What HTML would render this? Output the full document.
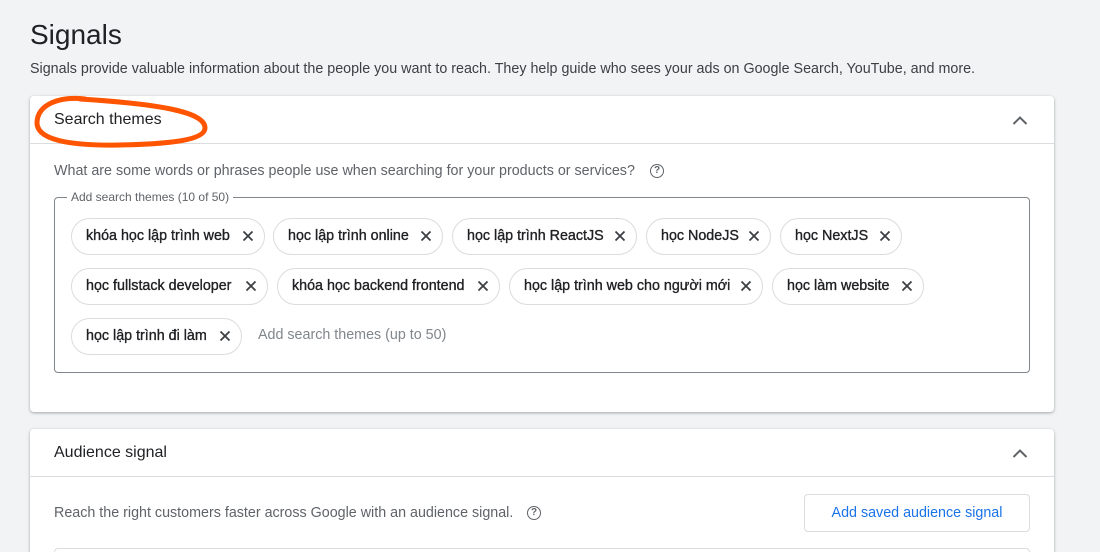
<!DOCTYPE html>
<html><head><meta charset="utf-8"><style>
*{box-sizing:border-box;margin:0;padding:0}
html,body{width:1100px;height:552px;overflow:hidden}
body{background:#f1f3f4;font-family:"Liberation Sans",Arial,sans-serif;position:relative;color:#202124}
.abs{position:absolute}
h1{position:absolute;left:30px;top:19px;font-size:28px;font-weight:400;color:#202124}
.sub{left:30px;top:61px;font-size:14.3px;color:#3c4043}
.card{position:absolute;left:30px;width:1024px;background:#fff;border-radius:4px;box-shadow:0 1px 3px rgba(60,64,67,.3),0 1px 2px rgba(60,64,67,.15)}
.hd{height:48px;border-bottom:1px solid #dadce0;position:relative}
.hd span{position:absolute;left:24px;top:15px;font-size:16px;color:#202124}
.chev{position:absolute;right:26px;top:19px}
.q{font-size:14.3px;color:#5f6368}
.box{position:absolute;left:24px;top:101px;width:976px;height:176px;border:1px solid #80868b;border-radius:4px}
.lg{position:absolute;left:12px;top:-8px;background:#fff;padding:0 4px;font-size:12px;color:#5f6368}
.chip{position:absolute;height:37px;border:1px solid #dadce0;border-radius:19px;font-size:14.3px;color:#202124;-webkit-text-stroke:0.35px #202124;padding:0 0 0 14px;line-height:35px;white-space:nowrap}
.chip i{position:absolute;display:block;right:10px;top:11px;width:12px;height:12px;line-height:0}
.chip i svg{display:block}
.help{position:absolute;width:14px;height:14px;border:1.6px solid #5f6368;border-radius:50%;font-size:10px;font-weight:bold;text-align:center;line-height:11px;color:#5f6368}
.btn{position:absolute;left:774px;top:65px;width:226px;height:38px;border:1px solid #dadce0;border-radius:4px;color:#1a73e8;font-size:14.3px;text-align:center;line-height:36px}
</style></head><body>
<h1>Signals</h1>
<div class="abs sub">Signals provide valuable information about the people you want to reach. They help guide who sees your ads on Google Search, YouTube, and more.</div>

<div class="card" style="top:96px;height:316px">
 <div class="hd"><span>Search themes</span>
 <svg class="chev" width="16" height="10" viewBox="0 0 16 10"><path d="M1.5 9L8 2.5 14.5 9" stroke="#5f6368" stroke-width="2" fill="none"/></svg></div>
 <div class="abs q" style="left:24px;top:67px">What are some words or phrases people use when searching for your products or services?</div>
 <span class="help" style="left:620px;top:68px">?</span>
 <div class="box"><div class="lg">Add search themes (10 of 50)</div></div>
</div>

<div class="card" style="top:429px;height:140px">
 <div class="hd"><span>Audience signal</span>
 <svg class="chev" width="16" height="10" viewBox="0 0 16 10"><path d="M1.5 9L8 2.5 14.5 9" stroke="#5f6368" stroke-width="2" fill="none"/></svg></div>
 <div class="abs q" style="left:24px;top:76px">Reach the right customers faster across Google with an audience signal.</div>
 <span class="help" style="left:497px;top:77px">?</span>
 <div class="btn">Add saved audience signal</div>
 <div class="abs" style="left:24px;top:119px;width:976px;height:30px;border:1px solid #dadce0;border-radius:4px"></div>
</div>

<div class="chip" style="left:71px;top:218px;width:194px">khóa học lập trình web<i><svg viewBox="0 0 12 12" width="12" height="12"><path d="M1.5 1.5L10.5 10.5M10.5 1.5L1.5 10.5" stroke="#3c4043" stroke-width="1.8"/></svg></i></div>
<div class="chip" style="left:273px;top:218px;width:170px">học lập trình online<i><svg viewBox="0 0 12 12" width="12" height="12"><path d="M1.5 1.5L10.5 10.5M10.5 1.5L1.5 10.5" stroke="#3c4043" stroke-width="1.8"/></svg></i></div>
<div class="chip" style="left:452px;top:218px;width:185px">học lập trình ReactJS<i><svg viewBox="0 0 12 12" width="12" height="12"><path d="M1.5 1.5L10.5 10.5M10.5 1.5L1.5 10.5" stroke="#3c4043" stroke-width="1.8"/></svg></i></div>
<div class="chip" style="left:646px;top:218px;width:125px">học NodeJS<i><svg viewBox="0 0 12 12" width="12" height="12"><path d="M1.5 1.5L10.5 10.5M10.5 1.5L1.5 10.5" stroke="#3c4043" stroke-width="1.8"/></svg></i></div>
<div class="chip" style="left:780px;top:218px;width:122px">học NextJS<i><svg viewBox="0 0 12 12" width="12" height="12"><path d="M1.5 1.5L10.5 10.5M10.5 1.5L1.5 10.5" stroke="#3c4043" stroke-width="1.8"/></svg></i></div>
<div class="chip" style="left:71px;top:268px;width:197px">học fullstack developer<i><svg viewBox="0 0 12 12" width="12" height="12"><path d="M1.5 1.5L10.5 10.5M10.5 1.5L1.5 10.5" stroke="#3c4043" stroke-width="1.8"/></svg></i></div>
<div class="chip" style="left:277px;top:268px;width:223px">khóa học backend frontend<i><svg viewBox="0 0 12 12" width="12" height="12"><path d="M1.5 1.5L10.5 10.5M10.5 1.5L1.5 10.5" stroke="#3c4043" stroke-width="1.8"/></svg></i></div>
<div class="chip" style="left:509px;top:268px;width:254px">học lập trình web cho người mới<i><svg viewBox="0 0 12 12" width="12" height="12"><path d="M1.5 1.5L10.5 10.5M10.5 1.5L1.5 10.5" stroke="#3c4043" stroke-width="1.8"/></svg></i></div>
<div class="chip" style="left:772px;top:268px;width:152px">học làm website<i><svg viewBox="0 0 12 12" width="12" height="12"><path d="M1.5 1.5L10.5 10.5M10.5 1.5L1.5 10.5" stroke="#3c4043" stroke-width="1.8"/></svg></i></div>
<div class="chip" style="left:71px;top:318px;width:171px">học lập trình đi làm<i><svg viewBox="0 0 12 12" width="12" height="12"><path d="M1.5 1.5L10.5 10.5M10.5 1.5L1.5 10.5" stroke="#3c4043" stroke-width="1.8"/></svg></i></div>
<div class="abs" style="left:258px;top:327px;font-size:14.3px;color:#80868b">Add search themes (up to 50)</div>

<svg class="abs" style="left:0;top:0" width="260" height="160"><path d="M85 99C60 96 38 104 37 122C36 140 70 146 120 145C170 144 205 140 205 128C205 112 160 104 80 99" stroke="#ff5500" stroke-width="5" fill="none" stroke-linecap="round"/></svg>
</body></html>
